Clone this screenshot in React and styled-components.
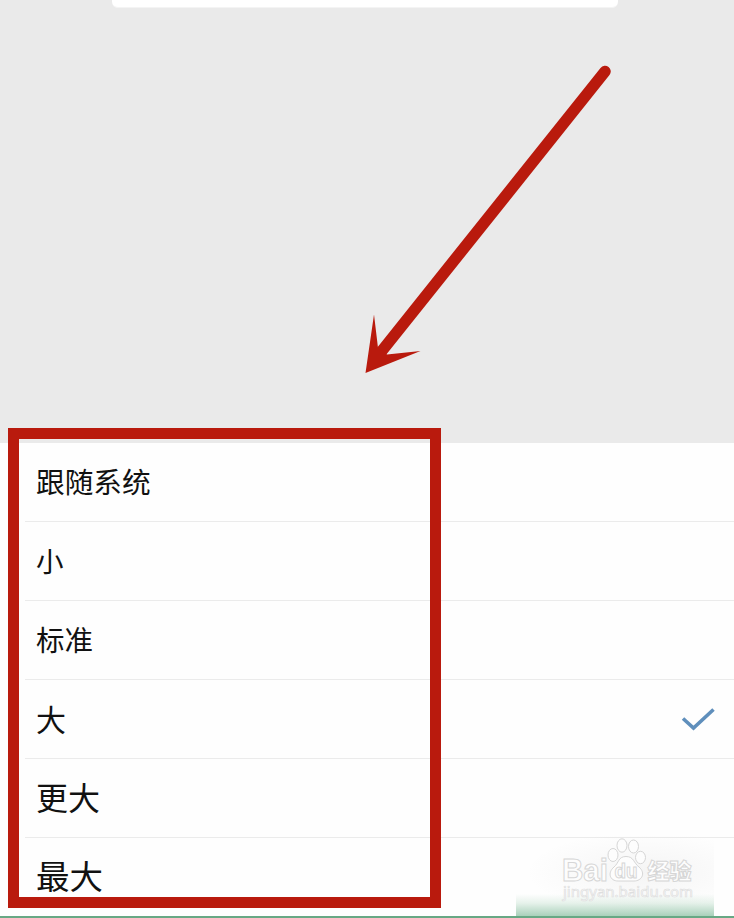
import React from "react";
import styled, { createGlobalStyle } from "styled-components";

const Global = createGlobalStyle`
  * { box-sizing: border-box; }
  body {
    margin: 0;
    background: #fff;
    font-family: "Noto Sans CJK SC", sans-serif;
  }
`;

const Screen = styled.main`
  position: relative;
  display: flex;
  flex-direction: column;
  width: 734px;
  height: 918px;
  overflow: hidden;
  background: #fefefe;
`;

const Backdrop = styled.section`
  display: flex;
  flex-shrink: 0;
  justify-content: center;
  align-items: flex-start;
  height: 443px;
  padding-right: 4px;
  background: #eaeaea;
`;

const Card = styled.div`
  width: 506px;
  height: 8px;
  border-radius: 0 0 6px 6px;
  background: #fff;
  border-bottom: 1px solid #f4f4f4;
`;

const OptionList = styled.ul`
  flex: 1;
  min-height: 0;
  margin: 0;
  padding: 0 0 0 25px;
  list-style: none;
`;

const Option = styled.li`
  display: flex;
  align-items: center;
  justify-content: space-between;
  height: 79px;
  padding: 0 19px 0 11px;
  color: #111;
  font-size: ${(p) => p.$size}px;
  line-height: 1;
  white-space: nowrap;

  &:first-child { height: 78px; }
  & + & { border-top: 1px solid #ebebeb; }
`;

const Label = styled.span`
  padding-bottom: ${(p) => p.$lift}px;
`;

const BottomBar = styled.footer`
  flex-shrink: 0;
  height: 2px;
  background: #67a884;
`;

const Highlight = styled.div`
  position: absolute;
  left: 8px;
  top: 428px;
  width: 433px;
  height: 480px;
  border: 11px solid #b91a0d;
`;

const Pointer = styled.svg`
  position: absolute;
  left: 355px;
  top: 55px;
`;

const Watermark = styled.div`
  position: absolute;
  left: 516px;
  top: 836px;
  width: 198px;
  height: 80px;
  background:
    linear-gradient(to bottom, rgba(176, 214, 191, 0) 58px, rgba(176, 214, 191, 0.3) 67px, rgba(160, 204, 179, 0.9) 80px),
    radial-gradient(ellipse at 65% 45%, rgba(120, 120, 120, 0.07), rgba(120, 120, 120, 0) 65%);
`;

const options = [
  { label: "跟随系统", size: 28.7, lift: 1 },
  { label: "小", size: 27.5, lift: 1 },
  { label: "标准", size: 28.5, lift: 1 },
  { label: "大", size: 30, lift: 2 },
  { label: "更大", size: 32, lift: 4 },
  { label: "最大", size: 33.5, lift: 4 },
];
const selected = "大";

function Check() {
  return (
    <svg width="34" height="26" viewBox="0 0 34 26" fill="none">
      <path d="M2 12.500 L12.500 22 L32.500 3.500" stroke="#5f8fbc" strokeWidth="3.600" />
    </svg>
  );
}

function Logo() {
  return (
    <svg width="198" height="80" viewBox="0 0 198 80" fill="#fdfdfd" stroke="#d6d6d6" strokeWidth="1">
      <text x="46" y="44.500" fontFamily="Liberation Sans" fontWeight="700" fontSize="31" textLength="46" lengthAdjust="spacingAndGlyphs">Bai</text>
      <ellipse cx="97" cy="19" rx="5" ry="6.500" />
      <ellipse cx="106" cy="9.500" rx="5" ry="6.700" />
      <ellipse cx="117.500" cy="10.500" rx="5" ry="6.500" />
      <ellipse cx="124.500" cy="21.500" rx="5" ry="6.200" />
      <path d="M110 20.500 C118 20.500 117.500 27 123 31 C130 37 126 45 118 45 H102 C94 45 91 37 98 31 C103 27 102 20.500 110 20.500 Z" />
      <text x="98.500" y="41.500" fontFamily="Liberation Sans" fontWeight="700" fontSize="20" textLength="23" lengthAdjust="spacingAndGlyphs">du</text>
      <text x="131.500" y="42.500" fontFamily="Noto Sans CJK SC" fontWeight="900" fontSize="22" textLength="44">经验</text>
      <text x="47" y="60.500" fontFamily="Noto Sans" fontSize="15" stroke="#dedede" strokeWidth="0.700" textLength="130" lengthAdjust="spacingAndGlyphs">jingyan.baidu.com</text>
    </svg>
  );
}

export default function App() {
  return (
    <>
      <Global />
      <Screen>
        <Backdrop>
          <Card />
        </Backdrop>
        <OptionList>
          {options.map((o) => (
            <Option key={o.label} $size={o.size}>
              <Label $lift={o.lift}>{o.label}</Label>
              {o.label === selected && <Check />}
            </Option>
          ))}
        </OptionList>
        <BottomBar />
        <Watermark>
          <Logo />
        </Watermark>
        <Highlight />
        <Pointer width="265" height="325" viewBox="355 55 265 325">
          <path d="M605 71.500 L381 352" stroke="#b91a0d" strokeWidth="11.500" strokeLinecap="round" />
          <path d="M365.500 373 L374 314.500 L378 348 L387 354.500 L420.500 351 Z" fill="#b91a0d" />
        </Pointer>
      </Screen>
    </>
  );
}
